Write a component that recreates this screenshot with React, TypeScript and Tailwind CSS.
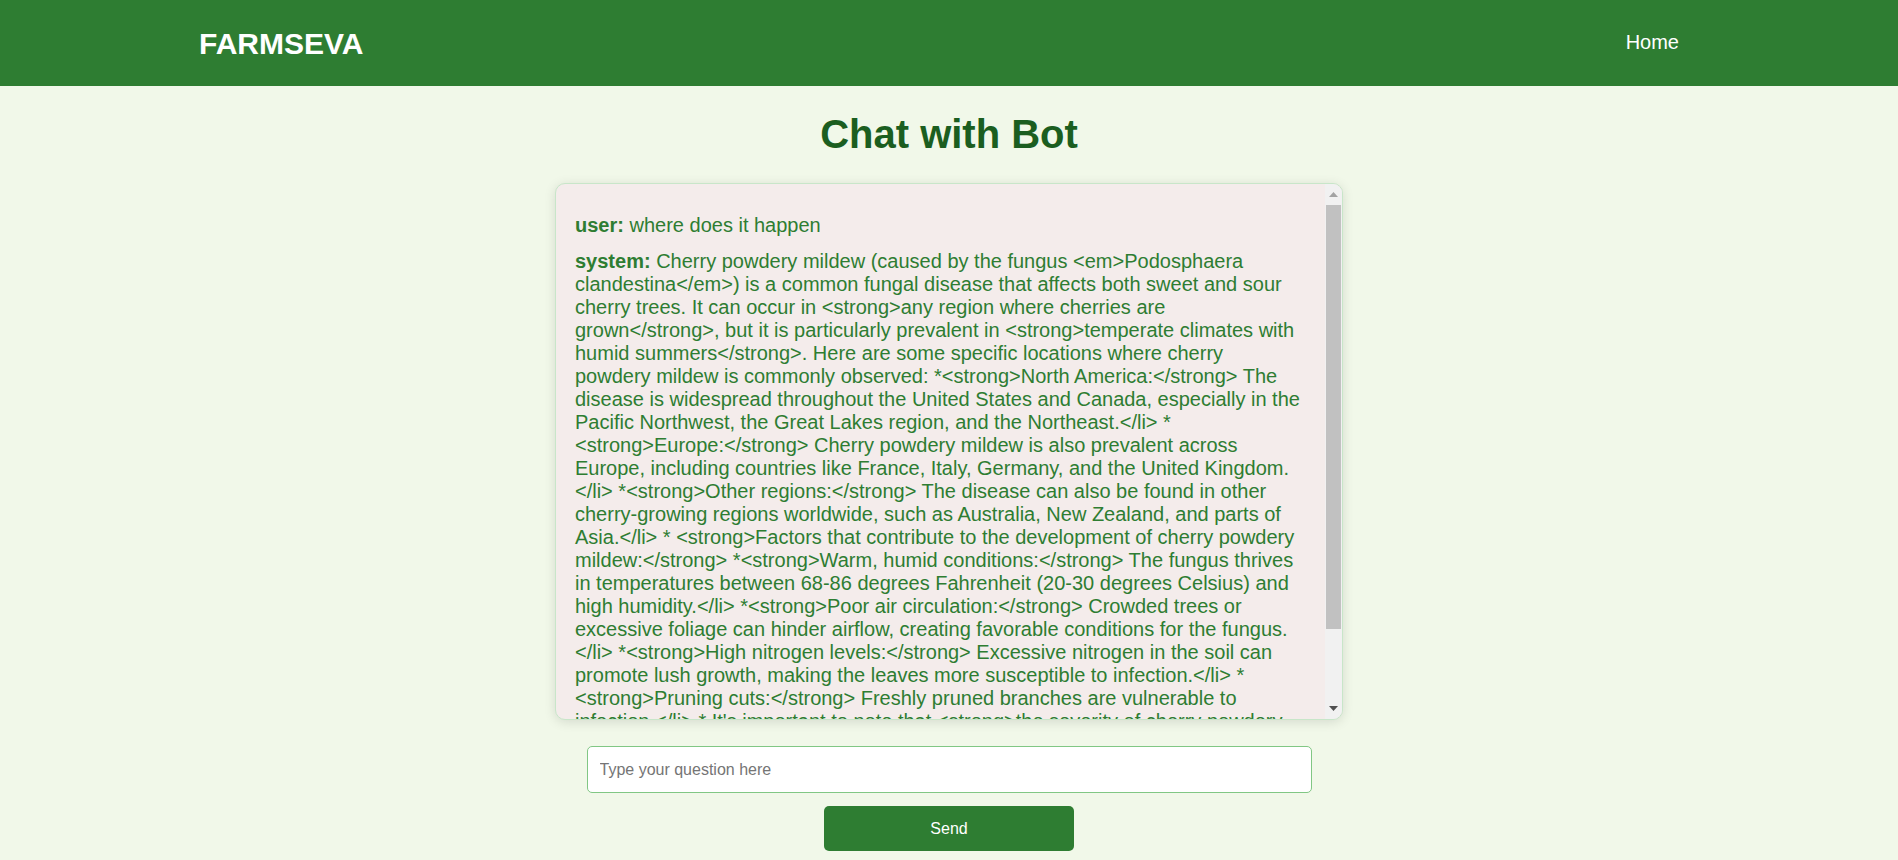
import React from "react";

const font = { fontFamily: '"Liberation Sans", Arial, sans-serif' };

const systemText =
  "Cherry powdery mildew (caused by the fungus <em>Podosphaera clandestina</em>) is a common fungal disease that affects both sweet and sour cherry trees. It can occur in <strong>any region where cherries are grown</strong>, but it is particularly prevalent in <strong>temperate climates with humid summers</strong>. Here are some specific locations where cherry powdery mildew is commonly observed: *<strong>North America:</strong> The disease is widespread throughout the United States and Canada, especially in the Pacific Northwest, the Great Lakes region, and the Northeast.</li> * <strong>Europe:</strong> Cherry powdery mildew is also prevalent across Europe, including countries like France, Italy, Germany, and the United Kingdom.</li> *<strong>Other regions:</strong> The disease can also be found in other cherry-growing regions worldwide, such as Australia, New Zealand, and parts of Asia.</li> * <strong>Factors that contribute to the development of cherry powdery mildew:</strong> *<strong>Warm, humid conditions:</strong> The fungus thrives in temperatures between 68-86 degrees Fahrenheit (20-30 degrees Celsius) and high humidity.</li> *<strong>Poor air circulation:</strong> Crowded trees or excessive foliage can hinder airflow, creating favorable conditions for the fungus.</li> *<strong>High nitrogen levels:</strong> Excessive nitrogen in the soil can promote lush growth, making the leaves more susceptible to infection.</li> * <strong>Pruning cuts:</strong> Freshly pruned branches are vulnerable to infection.</li> * It's important to note that <strong>the severity of cherry powdery mildew</strong> can vary from year to year depending on weather conditions.";

const messages = [
  { role: "user", text: "where does it happen" },
  { role: "system", text: systemText },
];

function Scrollbar() {
  return (
    <div className="flex w-[17px] shrink-0 flex-col bg-[#f1f1f1]">
      <div className="flex h-[21px] items-center justify-center">
        <svg width="9" height="5" viewBox="0 0 9 5">
          <polygon points="0,5 9,5 4.5,0" fill="#a3a3a3" />
        </svg>
      </div>
      <div className="flex flex-1 flex-col">
        <div className="mx-[1px] h-[424px] bg-[#c1c1c1]" />
      </div>
      <div className="flex h-[21px] items-center justify-center">
        <svg width="9" height="5" viewBox="0 0 9 5">
          <polygon points="0,0 9,0 4.5,5" fill="#505050" />
        </svg>
      </div>
    </div>
  );
}

export default function App() {
  return (
    <div className="min-h-[860px] bg-[#f1f8e9]" style={font}>
      <nav className="h-[86px] bg-[#2e7d32]">
        <div className="mx-auto flex h-full max-w-[1500px] items-center justify-between">
          <span className="text-[30px] font-bold text-white">FARMSEVA</span>
          <a className="-mt-[2px] px-5 text-[20px] text-white">Home</a>
        </div>
      </nav>

      <main className="flex flex-col items-center">
        <h1 className="mt-[25px] mb-[26px] text-[40px] font-bold leading-[46px] text-[#1b5e20]">Chat with Bot</h1>

        <div className="flex h-[537px] w-[788px] overflow-hidden rounded-[10px] border border-[#c8e6c9] bg-[#f4eceb] shadow-[0_2px_12px_rgba(0,0,0,0.12)]">
          <div className="flex-1 overflow-hidden pl-[19px] pr-[21px] pt-[30px]">
            {messages.map((m, i) => (
              <p key={i} className={`text-[20px] leading-[23px] text-[#2e7d32] ${i > 0 ? "mt-[13px]" : ""}`}>
                <strong>{m.role}:</strong> {m.text}
              </p>
            ))}
          </div>
          <Scrollbar />
        </div>

        <input
          type="text"
          placeholder="Type your question here"
          className="mt-[26px] h-[47px] w-[725px] rounded-[5px] border border-[#81c784] bg-white px-3 text-[16px] text-[#333] outline-none placeholder:text-[#757575]"
          style={font}
        />

        <button
          type="button"
          className="mt-[13px] h-[45px] w-[250px] rounded-[5px] bg-[#2e7d32] text-[16px] text-white"
          style={font}
        >
          Send
        </button>
      </main>
    </div>
  );
}
